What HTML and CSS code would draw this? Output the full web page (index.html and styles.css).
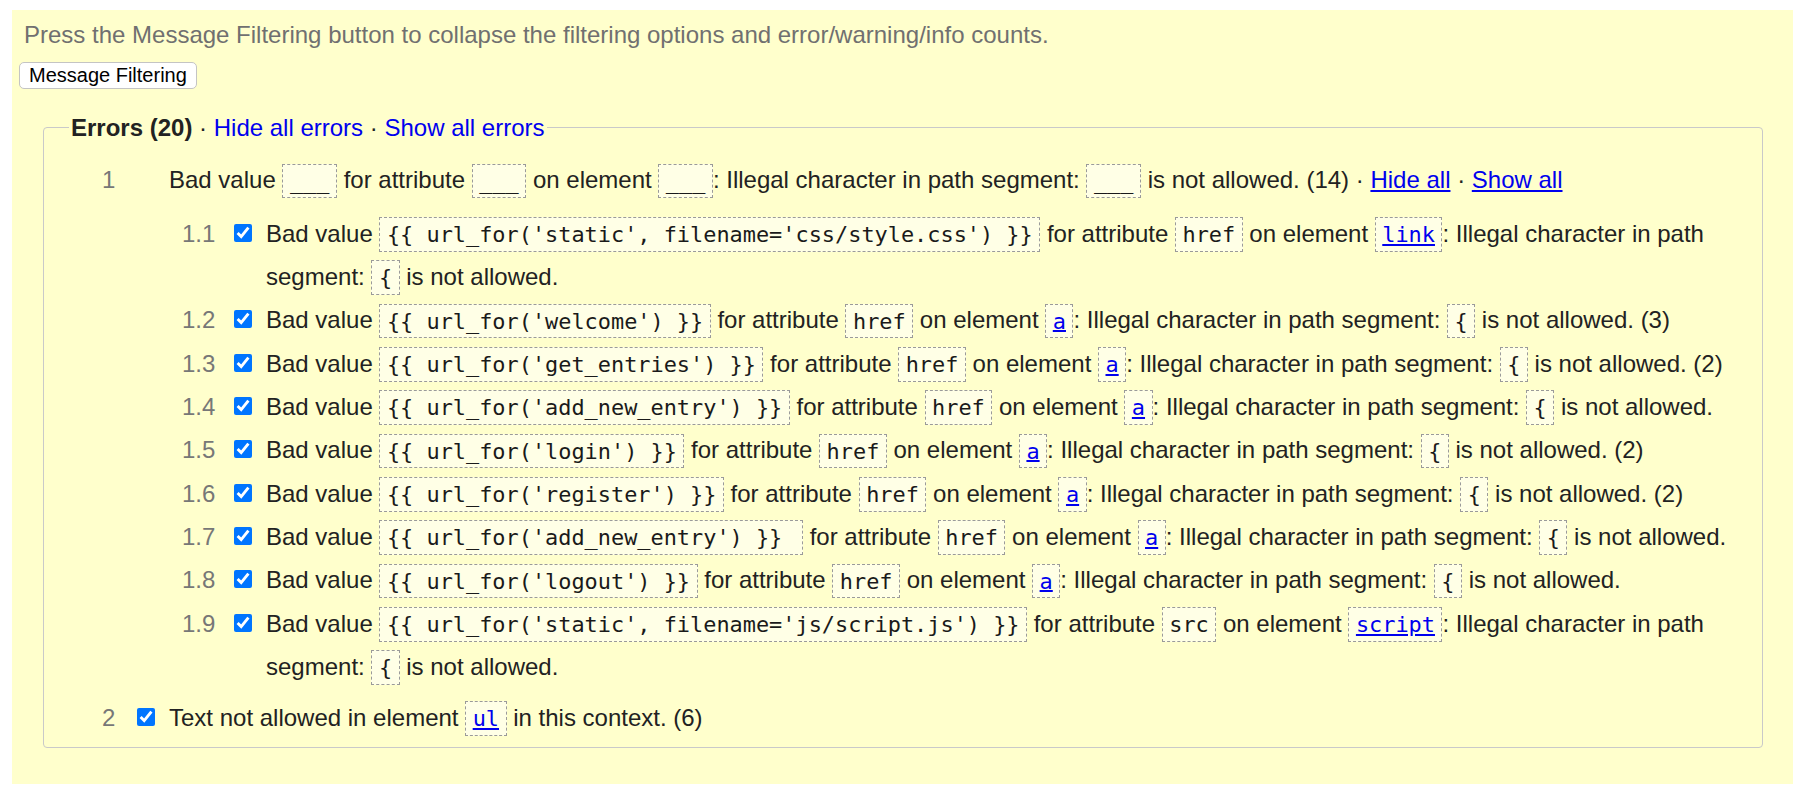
FILE: index.html
```html
<!DOCTYPE html>
<html lang="en">
<head>
<meta charset="utf-8">
<title>Message Filtering</title>
<link rel="stylesheet" href="styles.css">
</head>
<body>
<div class="filters">
  <p class="instructions">Press the Message Filtering button to collapse the filtering options and error/warning/info counts.</p>
  <button class="toggle" type="button">Message Filtering</button>
  <fieldset class="group">
    <legend><strong>Errors (20)</strong> · <a href="#">Hide all errors</a> · <a href="#">Show all errors</a></legend>
    <ol class="top">
      <li class="row">
        <span class="num">1</span><span class="cb"></span>
        <div class="body">
          <div class="msg">Bad value <code>___</code> for attribute <code>___</code> on element <code>___</code>: Illegal character in path segment: <code>___</code> is not allowed. (14) · <a class="u" href="#">Hide all</a> · <a class="u" href="#">Show all</a></div>
          <ol class="sub">
            <li class="row"><span class="num n2">1.1</span><span class="cb"><input type="checkbox" checked></span><div class="msg">Bad value <code>{{ url_for('static', filename='css/style.css') }}</code> for attribute <code>href</code> on element <code><a href="#">link</a></code>: Illegal character in path segment: <code>{</code> is not allowed.</div></li>
            <li class="row"><span class="num n2">1.2</span><span class="cb"><input type="checkbox" checked></span><div class="msg">Bad value <code>{{ url_for('welcome') }}</code> for attribute <code>href</code> on element <code><a href="#">a</a></code>: Illegal character in path segment: <code>{</code> is not allowed. (3)</div></li>
            <li class="row"><span class="num n2">1.3</span><span class="cb"><input type="checkbox" checked></span><div class="msg">Bad value <code>{{ url_for('get_entries') }}</code> for attribute <code>href</code> on element <code><a href="#">a</a></code>: Illegal character in path segment: <code>{</code> is not allowed. (2)</div></li>
            <li class="row"><span class="num n2">1.4</span><span class="cb"><input type="checkbox" checked></span><div class="msg">Bad value <code>{{ url_for('add_new_entry') }}</code> for attribute <code>href</code> on element <code><a href="#">a</a></code>: Illegal character in path segment: <code>{</code> is not allowed.</div></li>
            <li class="row"><span class="num n2">1.5</span><span class="cb"><input type="checkbox" checked></span><div class="msg">Bad value <code>{{ url_for('login') }}</code> for attribute <code>href</code> on element <code><a href="#">a</a></code>: Illegal character in path segment: <code>{</code> is not allowed. (2)</div></li>
            <li class="row"><span class="num n2">1.6</span><span class="cb"><input type="checkbox" checked></span><div class="msg">Bad value <code>{{ url_for('register') }}</code> for attribute <code>href</code> on element <code><a href="#">a</a></code>: Illegal character in path segment: <code>{</code> is not allowed. (2)</div></li>
            <li class="row"><span class="num n2">1.7</span><span class="cb"><input type="checkbox" checked></span><div class="msg">Bad value <code>{{ url_for('add_new_entry') }} </code> for attribute <code>href</code> on element <code><a href="#">a</a></code>: Illegal character in path segment: <code>{</code> is not allowed.</div></li>
            <li class="row"><span class="num n2">1.8</span><span class="cb"><input type="checkbox" checked></span><div class="msg">Bad value <code>{{ url_for('logout') }}</code> for attribute <code>href</code> on element <code><a href="#">a</a></code>: Illegal character in path segment: <code>{</code> is not allowed.</div></li>
            <li class="row"><span class="num n2">1.9</span><span class="cb"><input type="checkbox" checked></span><div class="msg">Bad value <code>{{ url_for('static', filename='js/script.js') }}</code> for attribute <code>src</code> on element <code><a href="#">script</a></code>: Illegal character in path segment: <code>{</code> is not allowed.</div></li>
          </ol>
        </div>
      </li>
      <li class="row">
        <span class="num">2</span><span class="cb"><input type="checkbox" checked></span>
        <div class="body">
          <div class="msg">Text not allowed in element <code><a href="#">ul</a></code> in this context. (6)</div>
        </div>
      </li>
    </ol>
  </fieldset>
</div>
</body>
</html>
```
FILE: styles.css
```css
* {
  box-sizing: border-box;
}

body {
  margin: 0;
  background: #ffffff;
  font-family: "Liberation Sans", Arial, sans-serif;
  color: #222222;
}

.filters {
  margin: 10px 0 0 12px;
  width: 1781px;
  background: #ffffcc;
  padding: 11px 30px 36px 7px;
}

.instructions {
  margin: 0 0 13px 5px;
  font-size: 24px;
  line-height: 27.6px;
  color: #707070;
}

.toggle {
  display: block;
  font-family: "Liberation Sans", Arial, sans-serif;
  font-size: 20px;
  line-height: 23px;
  padding: 1px 9px;
  color: #000000;
  background: #ffffff;
  border: 1px solid #c4c4c4;
  border-radius: 5px;
}

.group {
  margin: 25px 0 0 24px;
  padding: 0 20px 7.6px 0;
  border: 1px solid #c9c9c9;
  border-radius: 4px;
  min-width: 0;
}

.group legend {
  margin-left: 25px;
  padding: 0 2px;
  font-size: 24px;
  line-height: 27.6px;
  color: #222222;
}

.group legend strong {
  font-weight: bold;
}

.group legend a {
  color: #0000ee;
  text-decoration: none;
}

.top {
  list-style: none;
  margin: 17.2px 0 0 58px;
  padding: 0;
}

.sub {
  list-style: none;
  margin: 10.1px 0 7.4px 13px;
  padding: 0;
}

.row {
  display: flex;
  align-items: baseline;
  font-size: 24px;
  line-height: 43.33px;
}

.num {
  flex: none;
  width: 35px;
  color: #777777;
}

.num.n2 {
  width: 52px;
}

.cb {
  flex: none;
  width: 32px;
}

.cb input {
  width: 18px;
  height: 18px;
  margin: 0 0 8px 0;
  vertical-align: baseline;
}

.body {
  flex: 1;
  min-width: 0;
}

.row .msg {
  flex: 1;
  min-width: 0;
}

.msg a.u {
  color: #0000ee;
  text-decoration: underline;
}

code {
  font-family: "DejaVu Sans Mono", monospace;
  font-size: 21.9px;
  line-height: 24px;
  white-space: pre-wrap;
  border: 1px dashed #9a9a9a;
  background: #ffffe6;
  padding: 3.8px 6.5px;
  color: #1a1a1a;
}

code a {
  color: #0000ee;
  text-decoration: underline;
}
```
